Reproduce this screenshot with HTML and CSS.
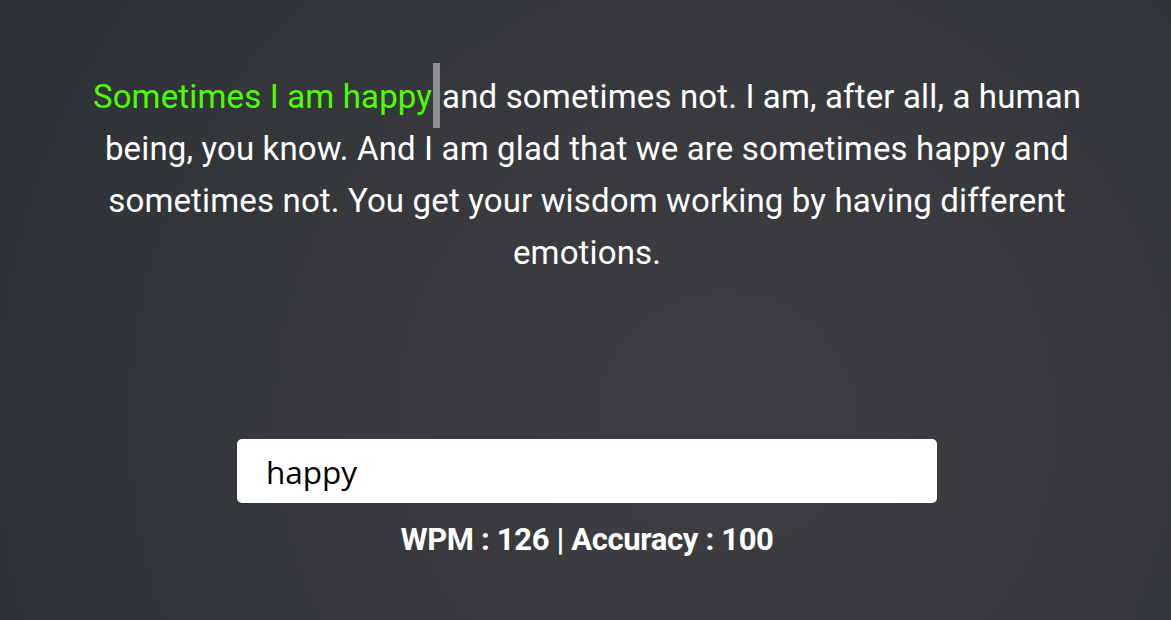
FILE: index.html
```html
<!DOCTYPE html>
<html lang="en">
<head>
<meta charset="utf-8">
<title>Typing Test</title>
<link rel="stylesheet" href="styles.css">
</head>
<body>
<main class="app">
  <p class="quote"><span class="done">Sometimes I am happy</span><span class="cur"></span>and sometimes not. I am, after all, a human being, you know. And I am glad that we are sometimes happy and sometimes not. You get your wisdom working by having different emotions.</p>
  <input class="typing" type="text" value="happy">
  <div class="stats">WPM : 126 | Accuracy : 100</div>
</main>
</body>
</html>
```
FILE: styles.css
```css
html, body {
  margin: 0;
  height: 100%;
}
body {
  background: radial-gradient(circle farthest-corner at 62% 68%, #3d3e41 0%, #383a3d 40%, #2e3136 100%);
  color: #ffffff;
  font-family: Roboto, "Noto Sans", sans-serif;
}
.app {
  display: flex;
  flex-direction: column;
  align-items: center;
  padding-top: 71px;
  padding-left: 3px;
}
.quote {
  margin: 0;
  width: 1000px;
  text-align: center;
  font-size: 33px;
  line-height: 52px;
  letter-spacing: 0.15px;
}
.done {
  color: #4cff00;
}
.cur {
  display: inline-block;
  width: 7px;
  height: 65px;
  margin: -8px 2px -5px 1px;
  vertical-align: top;
  background: #8f9092;
}
.typing {
  margin-top: 160px;
  width: 700px;
  height: 64px;
  box-sizing: border-box;
  border: none;
  border-radius: 5px;
  background: #ffffff;
  padding: 0 29px;
  font-family: "Open Sans", sans-serif;
  font-size: 31.5px;
  color: #000000;
  outline: none;
}
.stats {
  margin-top: 17px;
  font-size: 31px;
  line-height: 40px;
  font-weight: 700;
  letter-spacing: -0.35px;
}
```
